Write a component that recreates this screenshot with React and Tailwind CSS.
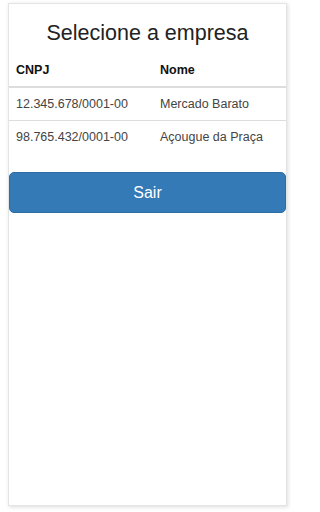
export default function App() {
  const empresas = [
    { cnpj: '12.345.678/0001-00', nome: 'Mercado Barato' },
    { cnpj: '98.765.432/0001-00', nome: 'Açougue da Praça' },
  ];

  return (
    <div className="h-[512px] w-full bg-white pt-[3px] pl-2 font-['Liberation_Sans',Arial,sans-serif]">
      <div className="flex h-[503px] w-[279px] flex-col border border-[#e4e4e4] bg-white shadow-[1px_1px_4px_rgba(0,0,0,0.14)]">
        <h1 className="mt-4 text-center text-[21.5px] leading-[26px] text-[#222]">Selecione a empresa</h1>

        <table className="mt-2 w-full border-collapse text-left text-[12.5px] leading-[16px]">
          <thead>
            <tr className="border-b-2 border-[#dddddd]">
              <th className="w-[143px] py-2 pl-[7px] font-bold text-[#111]">CNPJ</th>
              <th className="py-2 pl-2 font-bold text-[#111]">Nome</th>
            </tr>
          </thead>
          <tbody>
            {empresas.map((e, i) => (
              <tr key={e.cnpj} className={i === 0 ? 'border-b border-[#dddddd]' : ''}>
                <td className="py-2 pl-[7px] text-[#444]">{e.cnpj}</td>
                <td className="py-2 pl-2 text-[#444]">{e.nome}</td>
              </tr>
            ))}
          </tbody>
        </table>

        <button className="mt-[19px] h-[41px] w-full rounded-[5px] border border-[#2e6da4] bg-[#337ab7] text-[16px] text-white">
          Sair
        </button>
      </div>
    </div>
  );
}
